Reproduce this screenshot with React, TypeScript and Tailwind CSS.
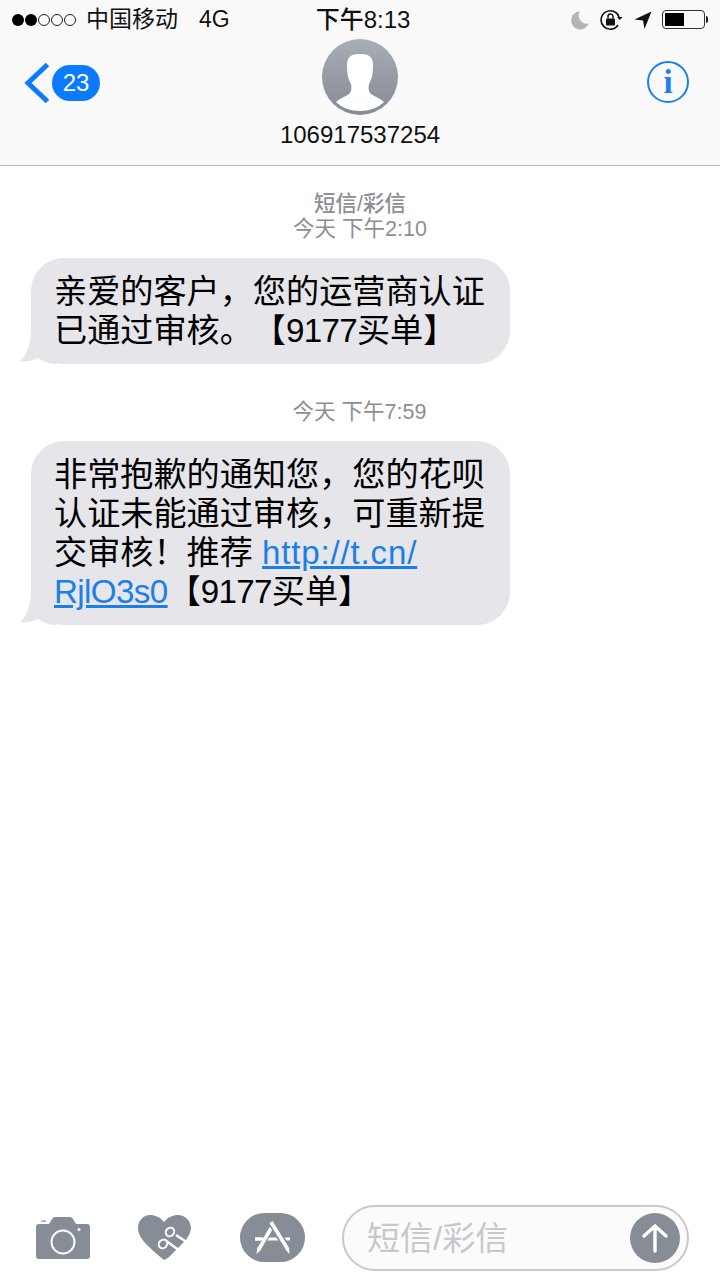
const sans = { fontFamily: '"Liberation Sans", "Noto Sans CJK SC", sans-serif' }

const StatusBar = () => (
  <div className="grid h-[39px] grid-cols-3 items-center text-[23px] leading-none text-[#111]">
    <div className="flex items-center pl-[12px]">
      <div className="flex items-center gap-[1px]">
        <span className="h-[12px] w-[12px] rounded-full bg-black" />
        <span className="h-[12px] w-[12px] rounded-full bg-black" />
        <span className="h-[12px] w-[12px] rounded-full border border-[#222]" />
        <span className="h-[12px] w-[12px] rounded-full border border-[#222]" />
        <span className="h-[12px] w-[12px] rounded-full border border-[#222]" />
      </div>
      <span className="ml-[10px] whitespace-nowrap">中国移动</span>
      <span className="ml-[21px]">4G</span>
    </div>
    <div className="pl-[6px] text-center text-[24px] font-medium whitespace-nowrap">下午8:13</div>
    <div className="flex items-center justify-end pr-[12px]">
      <svg width="20" height="20" viewBox="0 0 20 20" className="mr-[10px]">
        <path d="M10 1.500A9 9 0 1 0 18.600 13.500 A8 8 0 0 1 10 1.500Z" fill="#b5b5b5" />
      </svg>
      <svg width="24" height="22" viewBox="0 0 24 22" className="mr-[10px]" fill="none">
        <path d="M19 8A9.200 9.200 0 1 0 18 16" stroke="#111" strokeWidth="1.600" />
        <path d="M17 8h5.500l-2.700 3z" fill="#111" />
        <rect x="6" y="9.500" width="9" height="7" rx="1" fill="#111" />
        <path d="M8 9.500V7.500a2.500 2.500 0 0 1 5 0v2" stroke="#111" strokeWidth="1.500" />
      </svg>
      <svg width="18" height="18" viewBox="0 0 18 18" className="mr-[10px]">
        <path d="M17.500 0.500 0.500 8.500 9 9.500 10.500 18Z" fill="#111" />
      </svg>
      <div className="flex items-center">
        <div className="h-[19px] w-[43px] rounded-[4px] border border-[#333] p-[2px]">
          <div className="h-full w-[19px] bg-black" />
        </div>
        <div className="ml-[1px] h-[7px] w-[2px] rounded-r-full bg-[#222]" />
      </div>
    </div>
  </div>
)

const Header = () => (
  <header className="h-[166px] border-b border-[#b9b9bc] bg-[#f9f9f9]">
    <StatusBar />
    <div className="grid grid-cols-3">
      <div className="flex items-center pb-[22px] pl-[24px]">
        <svg width="26" height="42" viewBox="0 0 26 42" fill="none" className="mt-[-1px]">
          <path d="M23.500 2.500 4 21 23.500 39.500" stroke="#0a7aff" strokeWidth="5" />
        </svg>
        <span className="ml-[2px] flex h-[36px] w-[48px] items-center justify-center rounded-full bg-[#0a7aff] text-[24px] text-white">
          23
        </span>
      </div>
      <div className="flex flex-col items-center">
        <div className="h-[76px] w-[76px] overflow-hidden rounded-full bg-gradient-to-b from-[#a9adb8] to-[#858a95]">
          <svg width="76" height="76" viewBox="0 0 76 76">
            <path
              d="M38 15C30 15 25 17 25 26 25 34 26 40 29 45 30 50 29 53 27 55 23 58 18 59 14 63 20 69 29 72 38 72 47 72 56 69 62 63 58 59 53 58 49 55 47 53 46 50 47 45 50 40 51 34 51 26 51 17 46 15 38 15Z"
              fill="#fff"
            />
          </svg>
        </div>
        <div className="mt-[6px] whitespace-nowrap text-center text-[24px] leading-[28px] text-[#111]">106917537254</div>
      </div>
      <div className="flex justify-end pr-[31px] pt-[22px]">
        <div className="flex h-[42px] w-[42px] items-center justify-center rounded-full border-2 border-[#1a80f0]">
          <span
            className="text-[33px] leading-none font-bold text-[#1a80f0]"
            style={{ fontFamily: '"Liberation Serif", serif' }}
          >
            i
          </span>
        </div>
      </div>
    </div>
  </header>
)

const Bubble = ({ children }: { children: React.ReactNode }) => (
  <div className="relative ml-[31px] w-[479px]">
    <svg width="36" height="36" viewBox="0 0 36 36" className="absolute bottom-0 left-[-11px]">
      <path d="M11 0C11 14 8 25 0 33.500 8 34 14 32 18 30 23 33 28 36 36 36V0Z" fill="#e5e5ea" />
    </svg>
    <div className="relative rounded-[33px] bg-[#e5e5ea] py-[14px] pl-[23px] pr-[10px] text-[33.150px] leading-[39px] text-black [text-spacing-trim:space-all]">
      {children}
    </div>
  </div>
)

const Footer = () => (
  <footer className="flex h-[91px] items-start pl-[36px] pr-[31px] pt-[14px]">
    <svg width="55" height="42" viewBox="0 0 55 42" className="mt-[14px]">
      <path
        d="M3 7H13L16 2C17 .5 18 0 20 0H33C35 0 36 .5 37 2L40 7H51C53 7 54 8 54 10V39C54 41 53 42 51 42H3C1 42 0 41 0 39V10C0 8 1 7 3 7Z"
        fill="#878d97"
      />
      <rect x="5" y="3.500" width="5" height="1.200" fill="#878d97" />
      <circle cx="27" cy="25" r="11.500" fill="none" stroke="#fff" strokeWidth="2" />
      <circle cx="43" cy="12.500" r="1.500" fill="#fff" />
    </svg>
    <svg width="54" height="46" viewBox="0 0 54 46" className="ml-[47px] mt-[12px]">
      <path
        d="M26 7C22 2 17 0 12 0 5 0 0 6 0 13 0 22 8 30 26 45L30 43 48 25C51 20 53 17 53 13 53 6 47 0 40 0 35 0 30 2 26 7Z"
        fill="#878d97"
      />
      <path d="M38 20 50 28" stroke="#fff" strokeWidth="2.400" fill="none" />
      <path d="M27 25 42 36" stroke="#fff" strokeWidth="2.400" fill="none" />
      <ellipse cx="32" cy="17" rx="4.500" ry="4" fill="#878d97" stroke="#fff" strokeWidth="2" transform="rotate(-50 32 17)" />
      <ellipse cx="25" cy="29" rx="4.500" ry="4" fill="#878d97" stroke="#fff" strokeWidth="2" transform="rotate(-50 25 29)" />
    </svg>
    <div className="ml-[48px] mt-[10px] h-[49px] w-[65px] overflow-hidden rounded-[25px] bg-[#878d97]">
      <svg width="65" height="49" viewBox="0 0 65 49" fill="none">
        <path d="M15 26H50" stroke="#fff" strokeWidth="3" />
        <path d="M33 12 19 36" stroke="#878d97" strokeWidth="6" />
        <path d="M15 26H23" stroke="#fff" strokeWidth="3" />
        <path d="M33 12 19 36" stroke="#fff" strokeWidth="3.600" />
        <path d="M16.500 41 17.200 35 21 37Z" fill="#fff" />
        <path d="M31 9 47 35" stroke="#878d97" strokeWidth="7" />
        <path d="M31 9 47 35" stroke="#fff" strokeWidth="3.600" />
        <path d="M49.500 41 45 36 49 34Z" fill="#fff" />
      </svg>
    </div>
    <div className="ml-[37px] mt-[2px] flex h-[66px] flex-1 items-center justify-between rounded-[33px] border-2 border-[#c8c8cd] bg-[#fbfbfb] pl-[23px] pr-[7px]">
      <span className="text-[33px] leading-none text-[#c7c7cc]">短信/彩信</span>
      <div className="flex h-[50px] w-[50px] items-center justify-center rounded-full bg-[#878d97]">
        <svg width="26" height="30" viewBox="0 0 26 30" fill="none" stroke="#fff" strokeWidth="3.400" strokeLinecap="round">
          <path d="M13 3V28M2 13 13 3 24 13" />
        </svg>
      </div>
    </div>
  </footer>
)

export default function App() {
  return (
    <div className="flex h-[1280px] w-[720px] flex-col overflow-hidden bg-white" style={sans}>
      <Header />
      <main className="flex-1 pt-[26px]">
        <div className="text-center text-[21.500px] leading-[25px] text-[#8e8e93]">
          <div className="font-medium">短信/彩信</div>
          <div>今天 下午2:10</div>
        </div>
        <div className="mt-[16px]">
          <Bubble>
            亲爱的客户，您的运营商认证
            <br />
            已通过审核。【<span className="tracking-[-0.7px]">9177</span>买单】
          </Bubble>
        </div>
        <div className="mt-[36px] pr-[1px] text-center text-[21.500px] leading-[25px] text-[#8e8e93]">今天 下午7:59</div>
        <div className="mt-[16px]">
          <Bubble>
            非常抱歉的通知您，您的花呗
            <br />
            认证未能通过审核，可重新提
            <br />
            交审核！推荐{' '}
            <span className="text-[#1c7fe8] underline">
              <span className="tracking-[0.8px]">http://t.cn/</span>
              <br />
              <span className="tracking-[-0.6px]">RjlO3s0</span>
            </span>
            【<span className="tracking-[-0.7px]">9177</span>买单】
          </Bubble>
        </div>
      </main>
      <Footer />
    </div>
  )
}
